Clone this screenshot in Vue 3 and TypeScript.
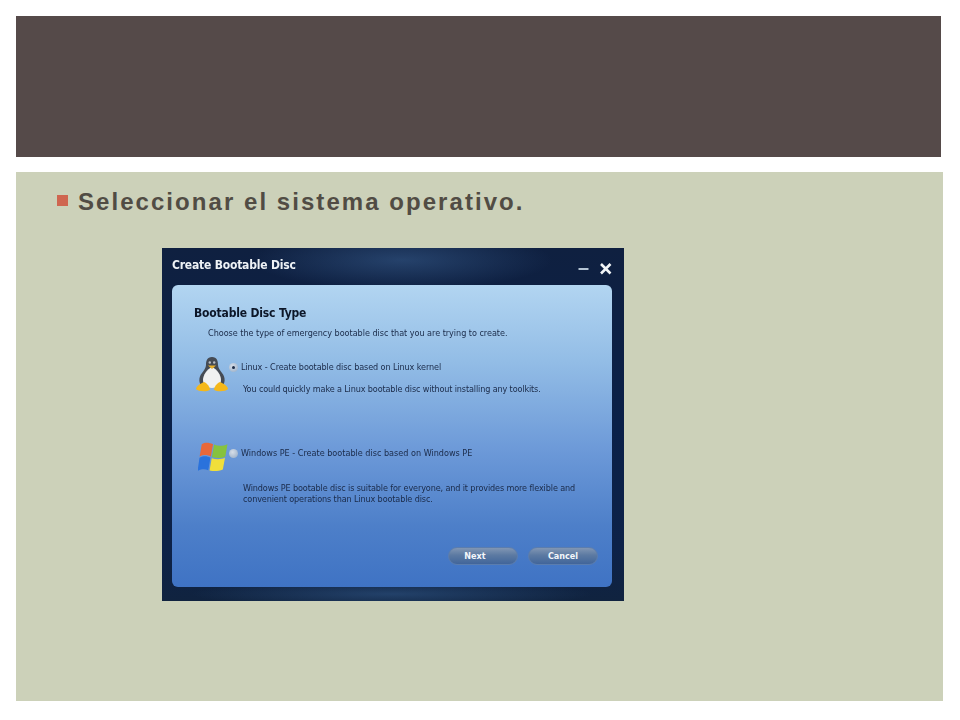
<script setup lang="ts">
const winPanes: { d: string; c: string }[] = [
  { d: 'M3.5 2 C7 0 10 0.5 14 2 L12 13.5 C9 12 5.5 11.5 1.5 13.5 Z', c: '#e8683a' },
  { d: 'M15 2.4 C19 4 23 4 27.5 2 L25.5 13.5 C21.5 15.4 17.5 15.2 13 14 Z', c: '#86c23f' },
  { d: 'M1.4 14.6 C5.4 12.6 8.5 13 11.6 14.6 L9.6 26.4 C6.5 25 3.5 25 -0.4 27 Z', c: '#2a72dc' },
  { d: 'M12.8 15.2 C17 16.4 21 16.6 25.2 14.8 L23.2 25.6 C19 27.4 15 27.4 10.8 26.6 Z', c: '#f0df3a' },
]
</script>

<template>
  <main class="slide">
    <header class="banner"></header>
    <section class="content">
      <div class="bullet-row">
        <span class="bullet"></span>
        <h1 class="bullet-text">Seleccionar el sistema operativo.</h1>
      </div>
      <div class="dialog">
        <div class="titlebar">
          <span class="title">Create Bootable Disc</span>
          <span class="controls">
            <svg width="12" height="12" viewBox="0 0 12 12"><rect x="0.5" y="5" width="10" height="2" fill="#b4c4d4" /></svg>
            <svg width="12" height="12" viewBox="0 0 12 12"><path d="M1 1 L10.5 10.5 M10.5 1 L1 10.5" stroke="#f2f5f7" stroke-width="2.6" /></svg>
          </span>
        </div>
        <div class="panel">
          <h2 class="panel-title">Bootable Disc Type</h2>
          <p class="panel-sub">Choose the type of emergency bootable disc that you are trying to create.</p>

          <div class="option option-linux">
            <svg class="os-icon" width="32" height="36" viewBox="0 0 32 36">
              <path d="M16 1 C11 1 10 5 10 9 C10 12 8 14 6 17 C2 22 3 27 6 31 L26 31 C29 27 30 22 26 17 C24 14 22 12 22 9 C22 5 21 1 16 1 Z" fill="#454b54" />
              <path d="M16 11 C11 13 7 19 7 24 C7 29 11 32 16 32 C21 32 25 29 25 24 C25 19 21 13 16 11 Z" fill="#f0f1f1" />
              <circle cx="13.8" cy="6.5" r="1.2" fill="#b8bdc2" />
              <circle cx="18.2" cy="6.5" r="1.2" fill="#b8bdc2" />
              <path d="M12 9.5 L20 9.5 L16 13 Z" fill="#e8b02a" />
              <path d="M8 26 C4 27.5 0 31 0 33 C2 35.5 10 36 14 34 C14 31 11 27 8 26 Z" fill="#f5b81a" />
              <path d="M24 26 C28 27.5 32 31 32 33 C30 35.5 22 36 18 34 C18 31 21 27 24 26 Z" fill="#f5b81a" />
            </svg>
            <div class="option-body">
              <label class="radio-line line-linux"><span class="radio radio-on"></span>Linux - Create bootable disc based on Linux kernel</label>
              <p class="desc desc-linux">You could quickly make a Linux bootable disc without installing any toolkits.</p>
            </div>
          </div>

          <div class="option option-win">
            <svg class="os-icon" width="30" height="30" viewBox="0 0 28 28">
              <path v-for="p in winPanes" :key="p.c" :d="p.d" :fill="p.c" />
            </svg>
            <div class="option-body">
              <label class="radio-line"><span class="radio"></span>Windows PE - Create bootable disc based on Windows PE</label>
              <p class="desc desc-win">Windows PE bootable disc is suitable for everyone, and it provides more flexible and<br />convenient operations than Linux bootable disc.</p>
            </div>
          </div>

          <div class="actions">
            <button class="btn btn-next" type="button">Next</button>
            <button class="btn" type="button">Cancel</button>
          </div>
        </div>
      </div>
    </section>
  </main>
</template>

<style>
html, body { margin: 0; background: #fff; }
</style>

<style scoped>
.slide {
  width: 960px;
  height: 720px;
  padding: 16px 0 0 16px;
  box-sizing: border-box;
  background: #fff;
  display: flex;
  flex-direction: column;
  gap: 15px;
  overflow: hidden;
}
.banner { width: 925px; height: 141px; background: #554a49; flex: none; }
.content {
  width: 927px;
  height: 529px;
  background: #ccd1b9;
  flex: none;
  padding: 0 0 0 41px;
  box-sizing: border-box;
}
.bullet-row { display: flex; align-items: center; height: 60px; }
.bullet { width: 11px; height: 11px; background: #cf6650; margin-right: 10px; flex: none; position: relative; top: -2px; }
.bullet-text {
  margin: 0;
  font: 700 24px/30px "Liberation Sans", Arial, sans-serif;
  letter-spacing: 2.05px;
  color: #514c44;
  white-space: nowrap;
}
.dialog {
  width: 462px;
  height: 353px;
  margin: 16px 0 0 105px;
  box-sizing: border-box;
  padding: 0 12px 14px 10px;
  display: flex;
  flex-direction: column;
  background:
    radial-gradient(ellipse 150px 30px at 240px 12px, rgba(60,100,150,.5), transparent),
    radial-gradient(ellipse 200px 14px at 230px 346px, rgba(50,90,140,.55), transparent),
    linear-gradient(180deg, #0f2040 0%, #0a2048 50%, #0d2248 85%, #10233f 100%);
}
.titlebar {
  height: 37px;
  flex: none;
  display: flex;
  align-items: center;
  justify-content: space-between;
}
.title { font: 700 12px "DejaVu Sans Condensed", "DejaVu Sans", sans-serif; letter-spacing: -0.2px; color: #eef2f6; position: relative; top: -2px; filter: blur(0.3px); }
.controls { display: flex; gap: 10px; align-items: center; position: relative; top: 2px; }
.panel {
  flex: 1;
  border-radius: 6px;
  background: linear-gradient(180deg, #b2d5f1 0%, #93bde6 25%, #6c99d8 55%, #4d7fc9 80%, #3f73c4 100%);
  font-family: "DejaVu Sans Condensed", "DejaVu Sans", sans-serif;
  color: #1a2a48;
  padding: 21px 14px 0 22px;
  display: flex;
  flex-direction: column;
}
.panel-title { margin: 0; font: 700 12px/14px "DejaVu Sans Condensed", "DejaVu Sans", sans-serif; letter-spacing: -0.17px; color: #0c1628; filter: blur(0.25px); }
.panel-sub { margin: 7px 0 0 14px; font-size: 9px; line-height: 12px; letter-spacing: -0.03px; white-space: nowrap; filter: blur(0.25px); }
.option { display: flex; align-items: flex-start; position: relative; }
.option-linux { margin-top: 17px; height: 86px; }
.option-win { height: 93px; }
.os-icon { flex: none; margin-left: 2px; filter: blur(0.4px); }
.option-win .os-icon { margin-left: 4px; margin-top: 0; }
.option-body { margin-left: 0; }
.radio-line { display: flex; align-items: center; font-size: 9px; line-height: 12px; white-space: nowrap; margin-top: 5px; filter: blur(0.25px); }
.line-linux { letter-spacing: -0.1px; }
.radio {
  width: 9px; height: 9px; border-radius: 50%;
  background: radial-gradient(circle at 40% 35%, #d6dee8, #93a9c4);
  margin: 0 3px 0 1px; flex: none; position: relative;
}
.radio-on::after {
  content: ""; position: absolute; left: 3px; top: 3px; width: 3px; height: 3px; border-radius: 50%; background: #1d2d48;
}
.desc { margin: 0; font-size: 9px; line-height: 11px; white-space: nowrap; color: #1a2a48; filter: blur(0.25px); }
.desc-linux { margin: 11px 0 0 15px; letter-spacing: -0.13px; }
.desc-win { margin: 24px 0 0 15px; letter-spacing: -0.12px; }
.actions { display: flex; gap: 10px; margin-top: 12px; justify-content: flex-end; }
.btn {
  width: 70px; height: 18px;
  border-radius: 9px;
  border: 1px solid #5b7dae;
  background: linear-gradient(180deg, #8196b4 0%, #5c7aa2 45%, #41659a 100%);
  color: #f3f6fa;
  font: 700 9px "DejaVu Sans Condensed", "DejaVu Sans", sans-serif;
  padding: 0;
}
.btn-next { padding-right: 16px; }
</style>
